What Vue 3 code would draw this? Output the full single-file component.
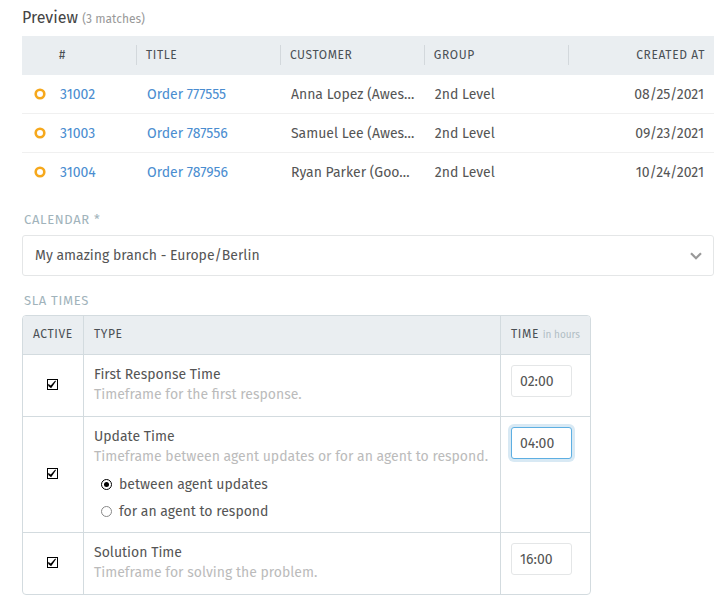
<script setup>
import { ref } from 'vue'

const tickets = [
  { id: '31002', title: 'Order 777555', customer: 'Anna Lopez (Awes…', group: '2nd Level', created: '08/25/2021' },
  { id: '31003', title: 'Order 787556', customer: 'Samuel Lee (Awes…', group: '2nd Level', created: '09/23/2021' },
  { id: '31004', title: 'Order 787956', customer: 'Ryan Parker (Goo…', group: '2nd Level', created: '10/24/2021' },
]

const calendar = ref('berlin')
const updateMode = ref('between')
const slas = ref([
  { key: 'first', name: 'First Response Time', help: 'Timeframe for the first response.', active: true, time: '02:00' },
  { key: 'update', name: 'Update Time', help: 'Timeframe between agent updates or for an agent to respond.', active: true, time: '04:00' },
  { key: 'solution', name: 'Solution Time', help: 'Timeframe for solving the problem.', active: true, time: '16:00' },
])
const current = ref('update')
</script>

<template>
  <main class="page">
    <h2 class="preview-title">Preview <small>(3 matches)</small></h2>

    <table class="tickets">
      <colgroup>
        <col class="col-state" />
        <col class="col-number" />
        <col span="3" class="col-data" />
        <col />
      </colgroup>
      <thead>
        <tr>
          <th></th>
          <th><span class="head">#</span></th>
          <th><span class="head">TITLE</span></th>
          <th><span class="head">CUSTOMER</span></th>
          <th><span class="head">GROUP</span></th>
          <th class="right"><span class="head">CREATED AT</span></th>
        </tr>
      </thead>
      <tbody>
        <tr v-for="t in tickets" :key="t.id">
          <td class="state">
            <svg width="12" height="12" viewBox="0 0 12 12" aria-hidden="true">
              <circle cx="6" cy="6" r="4.3" fill="none" stroke="#f6a81c" stroke-width="2.6" />
            </svg>
          </td>
          <td><a href="#">{{ t.id }}</a></td>
          <td><a href="#">{{ t.title }}</a></td>
          <td>{{ t.customer }}</td>
          <td>{{ t.group }}</td>
          <td class="right">{{ t.created }}</td>
        </tr>
      </tbody>
    </table>

    <label class="caption" for="calendar">CALENDAR *</label>
    <div class="select">
      <select id="calendar" v-model="calendar">
        <option value="berlin">My amazing branch - Europe/Berlin</option>
      </select>
      <svg class="chevron" width="12" height="8" viewBox="0 0 12 8" aria-hidden="true">
        <path d="M1 1.2 L6 6.2 L11 1.2" fill="none" stroke="#999" stroke-width="2.2" />
      </svg>
    </div>

    <div id="sla-caption" class="caption">SLA TIMES</div>
    <table class="sla" aria-labelledby="sla-caption">
      <colgroup>
        <col class="col-active" />
        <col />
        <col class="col-time" />
      </colgroup>
      <thead>
        <tr>
          <th>ACTIVE</th>
          <th>TYPE</th>
          <th>TIME <small>in hours</small></th>
        </tr>
      </thead>
      <tbody>
        <tr v-for="s in slas" :key="s.key">
          <td class="active">
            <input :id="s.key + '-active'" v-model="s.active" class="check" type="checkbox" :aria-label="s.name" />
          </td>
          <td>
            <label class="name" :for="s.key + '-time'">{{ s.name }}</label>
            <p class="help">{{ s.help }}</p>
            <div v-if="s.key === 'update'" class="modes">
              <label class="mode">
                <input v-model="updateMode" class="radio" type="radio" name="mode" value="between" />
                between agent updates
              </label>
              <label class="mode">
                <input v-model="updateMode" class="radio" type="radio" name="mode" value="respond" />
                for an agent to respond
              </label>
            </div>
          </td>
          <td>
            <input
              :id="s.key + '-time'"
              v-model="s.time"
              class="time"
              :class="{ current: current === s.key }"
              type="text"
              @focus="current = s.key"
            />
          </td>
        </tr>
      </tbody>
    </table>
  </main>
</template>

<style>
body {
  background: #fff;
}
</style>

<style scoped>
.page {
  padding: 7px 14px 14px 22px;
  color: #555;
  font: 14px/20px "Fira Sans", Roboto, "Noto Sans", sans-serif;
}
.page *,
.page *::before {
  box-sizing: border-box;
}
.preview-title {
  margin: 0 0 6px;
  font-size: 16px;
  line-height: 22px;
  font-weight: 400;
  color: #444;
}
.preview-title small {
  font-size: 12px;
  color: #999;
}
table {
  width: 100%;
  table-layout: fixed;
  border-collapse: separate;
  border-spacing: 0;
}
th {
  text-align: left;
  font-size: 12px;
  font-weight: 400;
  letter-spacing: 0.05em;
  background: #eaeef1;
  color: #4a5055;
  white-space: nowrap;
}
.col-state {
  width: 28px;
}
.col-number {
  width: 87px;
}
.col-data {
  width: 20.8%;
}
.tickets th {
  height: 39px;
  padding: 0 0 1px;
}
.head {
  display: block;
  padding: 0 9px;
  border-right: 1px solid #d3d8dc;
}
.tickets th:last-child .head {
  border-right: 0;
}
.tickets td {
  height: 39px;
  padding: 1px 10px 0;
  border-bottom: 1px solid #f0f0f0;
  white-space: nowrap;
}
.tickets tr:last-child td {
  border-bottom-color: transparent;
}
.tickets td.state {
  padding: 0 0 0 12px;
}
.state svg {
  display: block;
}
.tickets .right {
  text-align: right;
}
a {
  color: #4a8dd0;
  text-decoration: none;
}
.caption {
  display: block;
  margin: 18px 2px 5px;
  font-size: 13px;
  line-height: 20px;
  letter-spacing: 0.05em;
  color: #a1b3bb;
}
.select {
  display: grid;
  align-items: center;
}
.select select {
  grid-area: 1 / 1;
  width: 100%;
  height: 41px;
  padding: 0 36px 0 12px;
  appearance: none;
  border: 1px solid #e4e6e7;
  border-radius: 3px;
  background: #fff;
  color: inherit;
  font: inherit;
}
.chevron {
  grid-area: 1 / 1;
  justify-self: end;
  margin-right: 12px;
  pointer-events: none;
}
.select + .caption {
  margin: 15px 2px 4px;
}
.sla {
  max-width: 569px;
  border: 1px solid #d3dbdf;
  border-radius: 4px;
  overflow: hidden;
}
.col-active {
  width: 61px;
}
.col-time {
  width: 89px;
}
.sla th {
  height: 39px;
  padding: 0 0 2px 10px;
  border-bottom: 1px solid #d3dbdf;
}
.sla th small {
  font-size: 10px;
  letter-spacing: 0;
  color: #b0bdc4;
}
.sla td {
  padding: 10px 10px 11px;
  border-bottom: 1px solid #d3dbdf;
  vertical-align: top;
}
.sla tr > :not(:last-child) {
  border-right: 1px solid #d3dbdf;
}
.sla tbody tr:last-child td {
  border-bottom: 0;
}
.sla td.active {
  vertical-align: middle;
  padding: 0 2px 2px 0;
}
.name {
  display: block;
}
.help {
  margin: 0;
  color: #bbb;
}
.modes {
  display: grid;
  gap: 8px;
  padding: 8px 0 0 7px;
}
.mode {
  display: flex;
  align-items: center;
  gap: 7px;
  line-height: 19px;
}
.check,
.radio {
  appearance: none;
  display: grid;
  place-items: center;
  width: 11px;
  height: 11px;
  margin: 0;
  border: 1px solid #000;
  background: #fff;
}
.check {
  margin: 0 auto;
}
.check:checked::before {
  content: "";
  width: 9px;
  height: 9px;
  background: #000;
  clip-path: polygon(8% 42%, 36% 62%, 86% 6%, 94% 14%, 40% 92%, 8% 66%);
}
.radio {
  border-color: #888;
  border-radius: 50%;
}
.radio:checked {
  border-color: #000;
}
.radio:checked::before {
  content: "";
  width: 5px;
  height: 5px;
  border-radius: 50%;
  background: #000;
}
.time {
  display: block;
  width: 61px;
  height: 32px;
  padding: 0 8px;
  border: 1px solid #e4e6e7;
  border-radius: 3px;
  outline: none;
  background: #fff;
  color: inherit;
  font: inherit;
}
.time.current {
  border-color: #5eafe2;
  box-shadow: 0 0 0 3px #d8e9f4;
}
</style>
